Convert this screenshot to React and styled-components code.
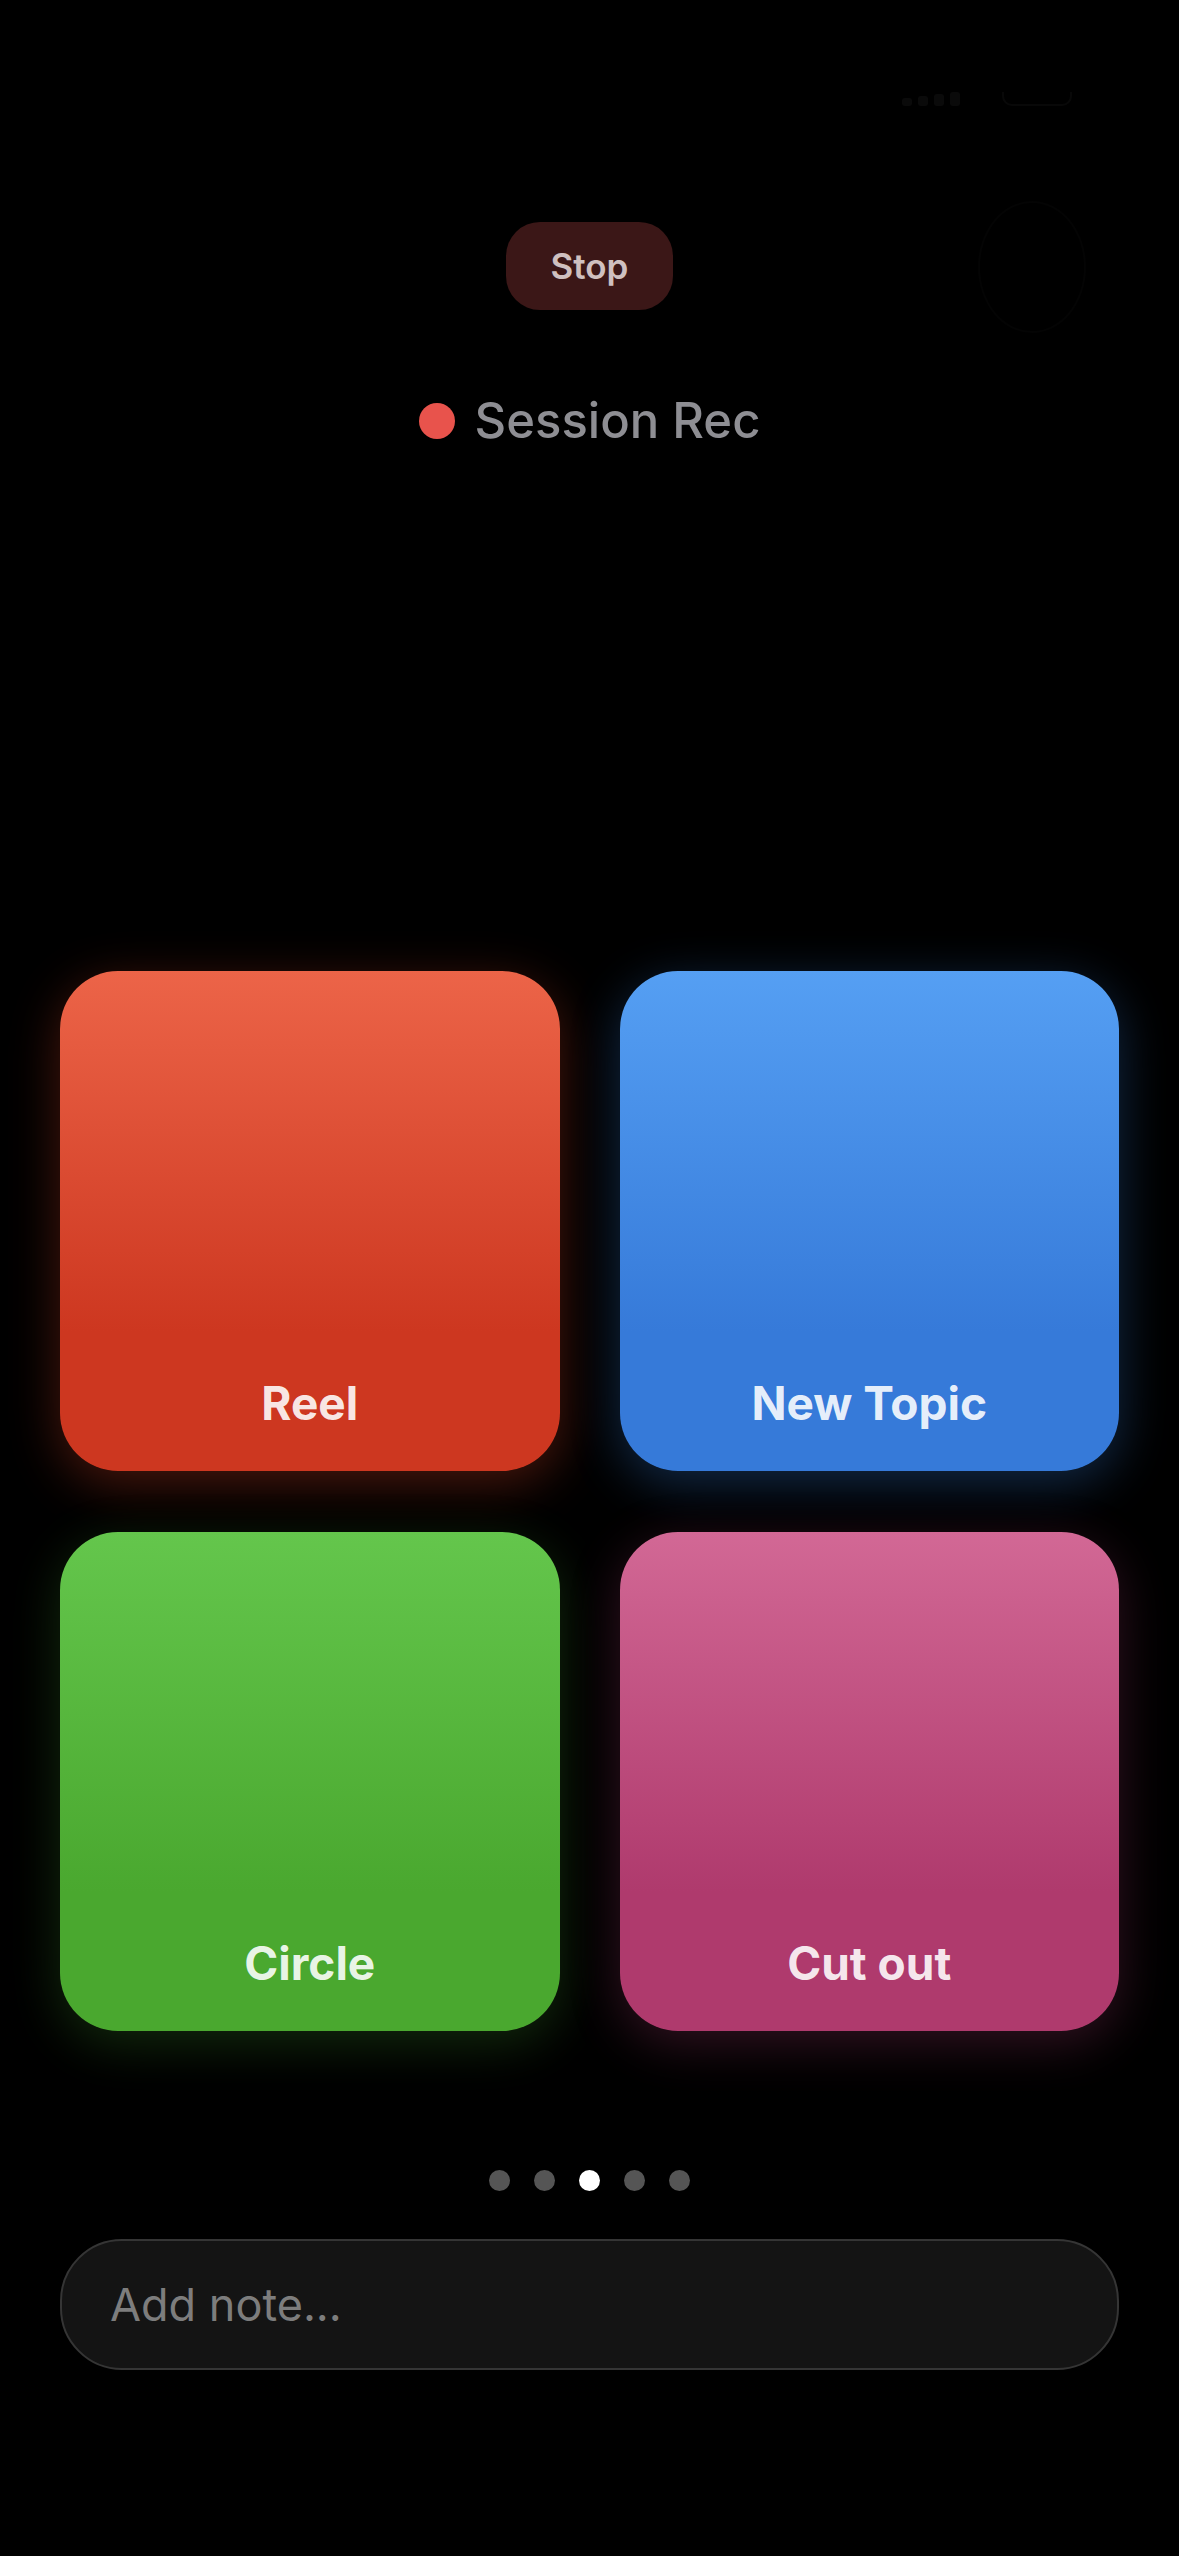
import React from "react";
import styled, { createGlobalStyle } from "styled-components";

const GlobalStyle = createGlobalStyle`
  html, body {
    margin: 0;
    padding: 0;
    background: #000;
  }
  body {
    font-family: Inter, "Noto Sans", "Liberation Sans", sans-serif;
    -webkit-font-smoothing: antialiased;
  }
  * { box-sizing: border-box; }
`;

const Screen = styled.div`
  position: relative;
  width: 1179px;
  min-height: 2556px;
  background: #000;
  display: flex;
  flex-direction: column;
  padding: 0 60px;
  overflow: hidden;
`;

const StatusBar = styled.div`
  height: 120px;
  display: flex;
  justify-content: flex-end;
  align-items: flex-start;
  gap: 42px;
  padding: 92px 47px 0 0;
  opacity: 0.06;
`;

const Signal = styled.div`
  display: flex;
  align-items: flex-end;
  gap: 6px;
  height: 14px;
`;

const SignalBar = styled.span`
  width: 10px;
  height: ${(p) => p.$h}px;
  border-radius: 3px;
  background: #aaa;
`;

const Battery = styled.div`
  width: 70px;
  height: 14px;
  border: 2px solid #888;
  border-top: none;
  border-radius: 0 0 10px 10px;
`;

const Ring = styled.div`
  position: absolute;
  left: 978px;
  top: 201px;
  width: 108px;
  height: 132px;
  border-radius: 50%;
  border: 2px solid rgba(255, 255, 255, 0.014);
`;

const StopButton = styled.button`
  align-self: center;
  margin-top: 102px;
  width: 167px;
  height: 88px;
  border: none;
  border-radius: 34px;
  background: #3b1717;
  color: #cfc0c0;
  font-family: inherit;
  font-size: 35px;
  font-weight: 600;
  line-height: 1;
  padding: 0;
`;

const SessionRow = styled.div`
  align-self: center;
  margin-top: 87px;
  height: 48px;
  display: flex;
  align-items: center;
  gap: 20px;
`;

const RecDot = styled.span`
  width: 36px;
  height: 36px;
  border-radius: 50%;
  background: #e8534c;
`;

const SessionLabel = styled.span`
  color: #8e8e93;
  font-size: 49px;
  font-weight: 500;
  line-height: 48px;
`;

const Grid = styled.div`
  margin-top: 526px;
  display: grid;
  grid-template-columns: 1fr 1fr;
  column-gap: 60px;
  row-gap: 61px;
`;

const Tile = styled.button`
  aspect-ratio: 1 / 1;
  width: 100%;
  border: none;
  border-radius: 58px;
  background: linear-gradient(180deg, ${(p) => p.$top} 0%, ${(p) => p.$bottom} 72%, ${(p) => p.$bottom} 100%);
  box-shadow: 0 12px 50px ${(p) => p.$glow};
  display: flex;
  align-items: flex-end;
  justify-content: center;
  padding: 0 0 45px;
  font-family: inherit;
`;

const TileLabel = styled.span`
  color: rgba(255, 255, 255, 0.9);
  font-size: 46px;
  font-weight: 700;
  line-height: 1;
`;

const Pager = styled.div`
  margin-top: 139px;
  display: flex;
  justify-content: center;
  gap: 24px;
`;

const PageDot = styled.span`
  width: 21px;
  height: 21px;
  border-radius: 50%;
  background: ${(p) => (p.$active ? "#ffffff" : "#555555")};
`;

const NoteInput = styled.input`
  margin-top: 48px;
  width: 100%;
  height: 131px;
  border: 2px solid #353535;
  border-radius: 62px;
  background: #141414;
  padding: 0 0 0 48px;
  font-family: inherit;
  font-size: 45px;
  color: #ddd;
  outline: none;
  &::placeholder {
    color: #7d7d7d;
  }
`;

const tiles = [
  { label: "Reel", top: "#ec6448", bottom: "#cd3720", glow: "rgba(230, 70, 40, 0.32)" },
  { label: "New Topic", top: "#559ff3", bottom: "#367ad9", glow: "rgba(60, 140, 240, 0.30)" },
  { label: "Circle", top: "#64c64c", bottom: "#4aa82f", glow: "rgba(80, 190, 60, 0.22)" },
  { label: "Cut out", top: "#d26895", bottom: "#af3a6d", glow: "rgba(200, 70, 130, 0.25)" },
];

export default function App() {
  return (
    <>
      <GlobalStyle />
      <Screen>
        <StatusBar>
          <Signal>
            <SignalBar $h={8} />
            <SignalBar $h={10} />
            <SignalBar $h={12} />
            <SignalBar $h={14} />
          </Signal>
          <Battery />
        </StatusBar>
        <Ring />
        <StopButton>Stop</StopButton>
        <SessionRow>
          <RecDot />
          <SessionLabel>Session Rec</SessionLabel>
        </SessionRow>
        <Grid>
          {tiles.map((t) => (
            <Tile key={t.label} $top={t.top} $bottom={t.bottom} $glow={t.glow}>
              <TileLabel>{t.label}</TileLabel>
            </Tile>
          ))}
        </Grid>
        <Pager>
          {[0, 1, 2, 3, 4].map((i) => (
            <PageDot key={i} $active={i === 2} />
          ))}
        </Pager>
        <NoteInput placeholder="Add note..." />
      </Screen>
    </>
  );
}
